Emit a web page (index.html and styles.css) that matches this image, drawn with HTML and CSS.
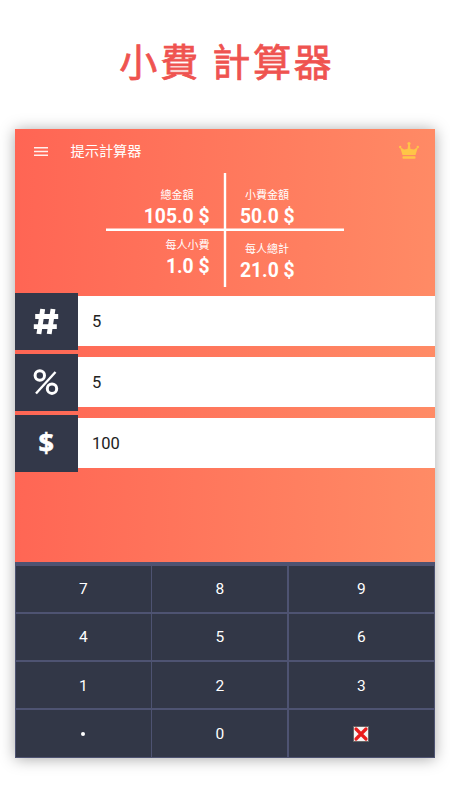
FILE: index.html
```
<!DOCTYPE html>
<html lang="zh-Hant">
<head>
  <meta charset="UTF-8">
  <title>小費 計算器</title>
  <meta name="viewport" content="width=device-width, initial-scale=1">
  <link rel="stylesheet" href="styles.css">
</head>
<body>
  <h1>小費 計算器</h1>
  <div class="app">
    <div class="toolbar">
      <svg class="menu" width="14" height="9" viewBox="0 0 14 9">
        <path d="M0 .8h14M0 4.5h14M0 8.2h14" stroke="#fff" stroke-opacity=".9" stroke-width="1.5"/>
      </svg>
      <span class="app-name">提示計算器</span>
      <svg class="crown" width="20" height="17" viewBox="0 0 20 17">
        <g fill="#ffc547">
          <circle cx="10" cy="1.6" r="1.6"/>
          <circle cx="1.2" cy="5" r="1.2"/>
          <circle cx="18.8" cy="5" r="1.2"/>
          <path d="M1 5l4 2.500L8.500 7 9.300 2h1.400l.8 5 3.500.5L19 5l-2.500 8h-13z"/>
          <rect x="3.500" y="14.200" width="13" height="2.600" rx=".8"/>
        </g>
      </svg>
    </div>

    <div class="totals">
      <div class="total left top">
        <span class="label shifted">總金額</span>
        <b>105.0 $</b>
      </div>
      <div class="total right top">
        <span class="label">小費金額</span>
        <b>50.0 $</b>
      </div>
      <div class="total left bottom">
        <span class="label">每人小費</span>
        <b>1.0 $</b>
      </div>
      <div class="total right bottom">
        <span class="label">每人總計</span>
        <b>21.0 $</b>
      </div>
      <svg class="lines" width="240" height="115" viewBox="0 0 240 115">
        <path d="M119 0v114M0 56.700h238" stroke="#fff" stroke-width="2.400"/>
      </svg>
    </div>

    <div class="fields">
      <div class="field">
        <div class="sign">
          <svg width="26" height="27" viewBox="0 0 26 27">
            <path d="M9.700 1L5.900 26M20 1l-3.800 25M2.200 8.500h23M.8 18.600h23" fill="none" stroke="#fff" stroke-width="4.900"/>
          </svg>
        </div>
        <div class="value">5</div>
      </div>
      <div class="field">
        <div class="sign">
          <svg width="26" height="28" viewBox="0 0 26 28">
            <g fill="none" stroke="#fff" stroke-width="3">
              <circle cx="6.800" cy="7.500" r="4.700"/>
              <circle cx="19" cy="20.700" r="4.700"/>
              <path d="M22.500 4L3 25.500" stroke-width="2.400"/>
            </g>
          </svg>
        </div>
        <div class="value">5</div>
      </div>
      <div class="field">
        <div class="sign dollar">$</div>
        <div class="value">100</div>
      </div>
    </div>

    <div class="keypad">
      <div class="key">7</div>
      <div class="key">8</div>
      <div class="key">9</div>
      <div class="key">4</div>
      <div class="key">5</div>
      <div class="key">6</div>
      <div class="key">1</div>
      <div class="key">2</div>
      <div class="key">3</div>
      <div class="key"><span class="dot"></span></div>
      <div class="key">0</div>
      <div class="key">
        <svg width="16" height="16" viewBox="0 0 16 16">
          <rect x=".5" y=".5" width="15" height="15" fill="#f5f5f5" stroke="#666"/>
          <path d="M3 3l10 10M13 3L3 13" stroke="#e81c1c" stroke-width="3.200" stroke-linecap="round"/>
        </svg>
      </div>
    </div>
  </div>
</body>
</html>
```

FILE: styles.css
```
* {
  box-sizing: border-box;
}
body {
  margin: 0;
  height: 800px;
  background: #fff;
  font-family: Roboto, 'Noto Sans CJK TC', sans-serif;
  color: #fff;
  overflow: hidden;
}
h1 {
  margin: 0;
  padding: 32px 0 0 4px;
  height: 129px;
  font-family: 'Noto Sans CJK TC', sans-serif;
  font-size: 38px;
  font-weight: 400;
  line-height: 56px;
  letter-spacing: 2.800px;
  text-align: center;
  color: #ef5350;
  -webkit-text-stroke: 0.8px #ef5350;
}
.app {
  display: flex;
  flex-direction: column;
  width: 420px;
  height: 628.5px;
  margin: 0 auto;
  background: linear-gradient(92deg, #ff6554, #ff8c66);
  box-shadow: 0 1px 14px rgba(0,0,0,0.34);
}

/* toolbar */
.toolbar {
  display: flex;
  align-items: center;
  height: 44px;
  padding: 0 16px 0 18.500px;
}
.app-name {
  margin-left: 23px;
  font-size: 14.2px;
  line-height: 20px;
}
.crown {
  margin: -2px 0 0 auto;
}

/* totals */
.totals {
  position: relative;
  display: grid;
  grid-template-columns: 119px 119px;
  grid-template-rows: 57px 57px;
  width: 238px;
  height: 119.5px;
  margin-left: 90.5px;
}
.total {
  display: flex;
  flex-direction: column;
}
.left {
  align-items: flex-end;
  padding-right: 15px;
}
.right {
  align-items: flex-start;
  padding-left: 15.500px;
}
.top {
  padding-top: 15px;
}
.left.bottom {
  padding-top: 8px;
}
.right.bottom {
  padding-top: 12px;
}
.label {
  font-size: 11px;
  line-height: 16px;
}
.right .label {
  margin-left: 5px;
}
.shifted {
  margin-right: 16px;
}
.total b {
  font-size: 19.300px;
  line-height: 25px;
}
.lines {
  position: absolute;
  left: 0;
  top: 0;
}

/* input rows */
.fields {
  display: flex;
  flex-direction: column;
  gap: 4px;
}
.field {
  display: flex;
  align-items: center;
  height: 57px;
}
.sign {
  display: flex;
  align-items: center;
  justify-content: center;
  width: 62.500px;
  height: 57px;
  background: #333849;
}
.dollar {
  padding-bottom: 2px;
  font-family: 'Noto Sans', sans-serif;
  font-size: 27px;
  font-weight: 700;
  -webkit-text-stroke: 0.6px #fff;
}
.value {
  flex: 1;
  height: 49.500px;
  padding-left: 14.500px;
  background: #fff;
  color: #222;
  font-size: 16.500px;
  line-height: 51px;
}

/* keypad */
.keypad {
  display: grid;
  grid-template-columns: 135px 135px 1fr;
  grid-template-rows: repeat(4, 1fr);
  gap: 1.500px;
  height: 195.500px;
  margin-top: auto;
  padding: 3.500px 1px 1px 0.800px;
  background: #4e5372;
}
.key {
  display: flex;
  align-items: center;
  justify-content: center;
  padding-top: 1px;
  background: #323747;
  font-size: 15.500px;
}
.dot {
  width: 4px;
  height: 4px;
  border-radius: 50%;
  background: #fff;
}
```
